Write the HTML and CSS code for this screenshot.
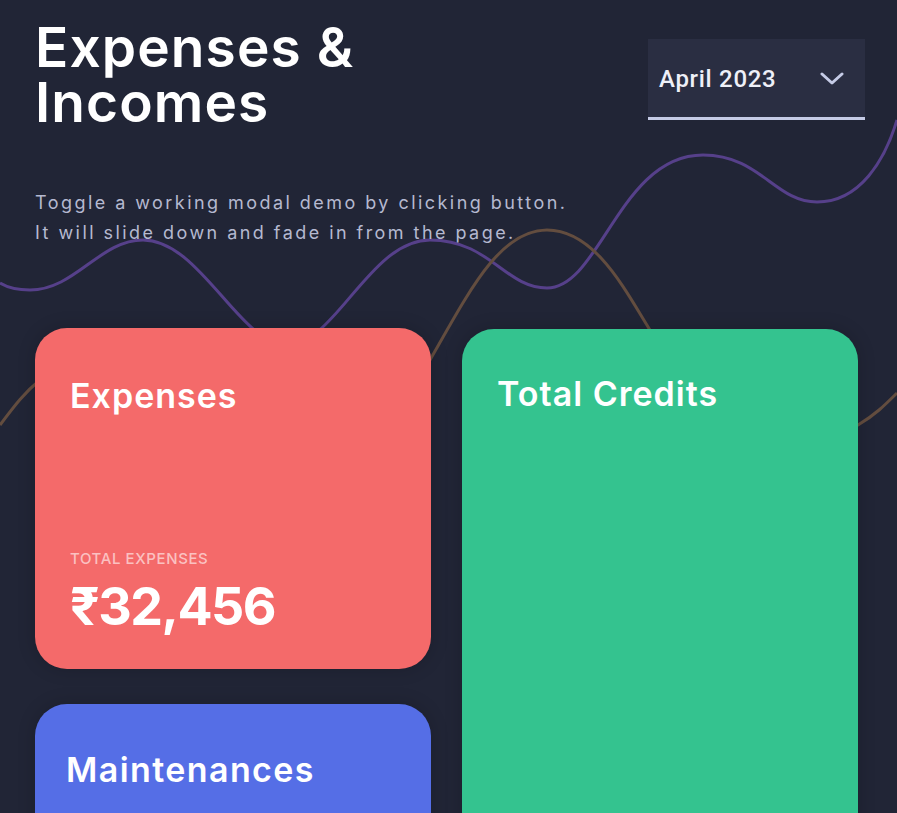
FILE: index.html
```html
<!DOCTYPE html>
<html lang="en">
<head>
<meta charset="utf-8">
<title>Expenses &amp; Incomes</title>
<link rel="stylesheet" href="styles.css">
</head>
<body>
<div class="page">
  <svg class="waves" width="897" height="500" viewBox="0 0 897 500" aria-hidden="true">
    <path class="wave wave-purple" d="M0,283 C10,289 20,290 30,290 C75,290 100,240 143,240 C200,240 240,345 287,345 C335,345 370,240 430,240 C490,240 505,288 547,288 C600,288 620,155 703,155 C760,155 775,202 817,202 C860,202 885,160 897,120"/>
    <path class="wave wave-brown" d="M0,425 C15,405 25,392 40,380 C120,330 300,420 430,360 C470,290 500,230 547,230 C595,230 625,290 650,330 C700,420 780,470 858,425 C875,415 885,405 897,393"/>
  </svg>
  <main class="content">
    <header class="top">
      <h1 class="title">Expenses &amp;<br>Incomes</h1>
      <div class="month-select">
        <span class="month-label">April 2023</span>
        <svg class="chevron" width="24" height="14" viewBox="0 0 24 14" aria-hidden="true">
          <path d="M2,2 L12,11 L22,2" fill="none" stroke="#c5cbe6" stroke-width="3" stroke-linecap="round" stroke-linejoin="round"/>
        </svg>
      </div>
    </header>
    <p class="intro">Toggle a working modal demo by clicking button.<br>It will slide down and fade in from the page.</p>
    <section class="cards">
      <article class="card card-expenses">
        <h2 class="card-title">Expenses</h2>
        <div class="card-total">
          <div class="total-label">TOTAL EXPENSES</div>
          <div class="total-amount">₹32,456</div>
        </div>
      </article>
      <article class="card card-credits">
        <h2 class="card-title">Total Credits</h2>
      </article>
      <article class="card card-maint">
        <h2 class="card-title">Maintenances</h2>
      </article>
    </section>
  </main>
</div>
</body>
</html>
```

FILE: styles.css
```css
* { box-sizing: border-box; }
html, body {
  margin: 0;
  padding: 0;
  background: #212536;
  height: 100%;
  overflow: hidden;
}
body {
  font-family: Inter, "Noto Sans", sans-serif;
  color: #ffffff;
}
.page {
  position: relative;
  width: 897px;
  min-height: 813px;
}
.waves {
  position: absolute;
  top: 0;
  left: 0;
  z-index: 0;
}
.wave {
  fill: none;
  stroke-width: 3;
}
.wave-purple { stroke: #56408a; }
.wave-brown { stroke: #634d3f; }
.content {
  position: relative;
  z-index: 1;
  padding: 20px 32px 0 35px;
}
.top {
  display: flex;
  justify-content: space-between;
  align-items: flex-start;
  height: 110px;
}
.title {
  margin: 0;
  font-size: 55px;
  line-height: 55px;
  font-weight: 600;
  letter-spacing: 1.1px;
  color: #ffffff;
}
.month-select {
  margin-top: 19px;
  width: 217px;
  height: 81px;
  background: #2a2e42;
  border-bottom: 3px solid #c5cbe6;
  display: flex;
  align-items: center;
  justify-content: space-between;
  padding: 2px 21px 0 11px;
}
.month-label {
  font-family: Roboto, "Liberation Sans", sans-serif;
  font-weight: 500;
  font-size: 24px;
  letter-spacing: 0.7px;
  color: #eef0f8;
}
.chevron { display: block; }
.intro {
  margin: 58px 0 0;
  font-size: 18px;
  line-height: 30px;
  letter-spacing: 2.45px;
  color: #b5b9d0;
}
.cards {
  margin-top: 80px;
  display: grid;
  grid-template-columns: 396px 396px;
  column-gap: 31px;
  row-gap: 35px;
  align-items: start;
}
.card {
  border-radius: 32px;
  box-shadow: 0 0 18px rgba(0, 0, 0, 0.18);
}
.card-title {
  margin: 0;
  font-size: 34px;
  line-height: 40px;
  font-weight: 600;
  letter-spacing: 1px;
}
.card-expenses {
  background: #f46a6a;
  height: 341px;
  padding: 48px 35px 34px;
  display: flex;
  flex-direction: column;
  justify-content: space-between;
}
.total-label {
  font-size: 15px;
  line-height: 18px;
  font-weight: 500;
  color: #fbc1c1;
  letter-spacing: 0.6px;
}
.total-amount {
  margin-top: 11px;
  font-size: 52px;
  line-height: 56px;
  font-weight: 700;
  letter-spacing: -1.5px;
}
.card-credits {
  background: #34c38f;
  grid-row: 1 / span 2;
  grid-column: 2;
  height: 520px;
  margin-top: 1px;
  padding: 45px 35px;
}
.card-maint {
  background: #556ee6;
  grid-column: 1;
  height: 200px;
  padding: 46px 31px;
}
.card-maint .card-title { letter-spacing: 1.4px; }
```
